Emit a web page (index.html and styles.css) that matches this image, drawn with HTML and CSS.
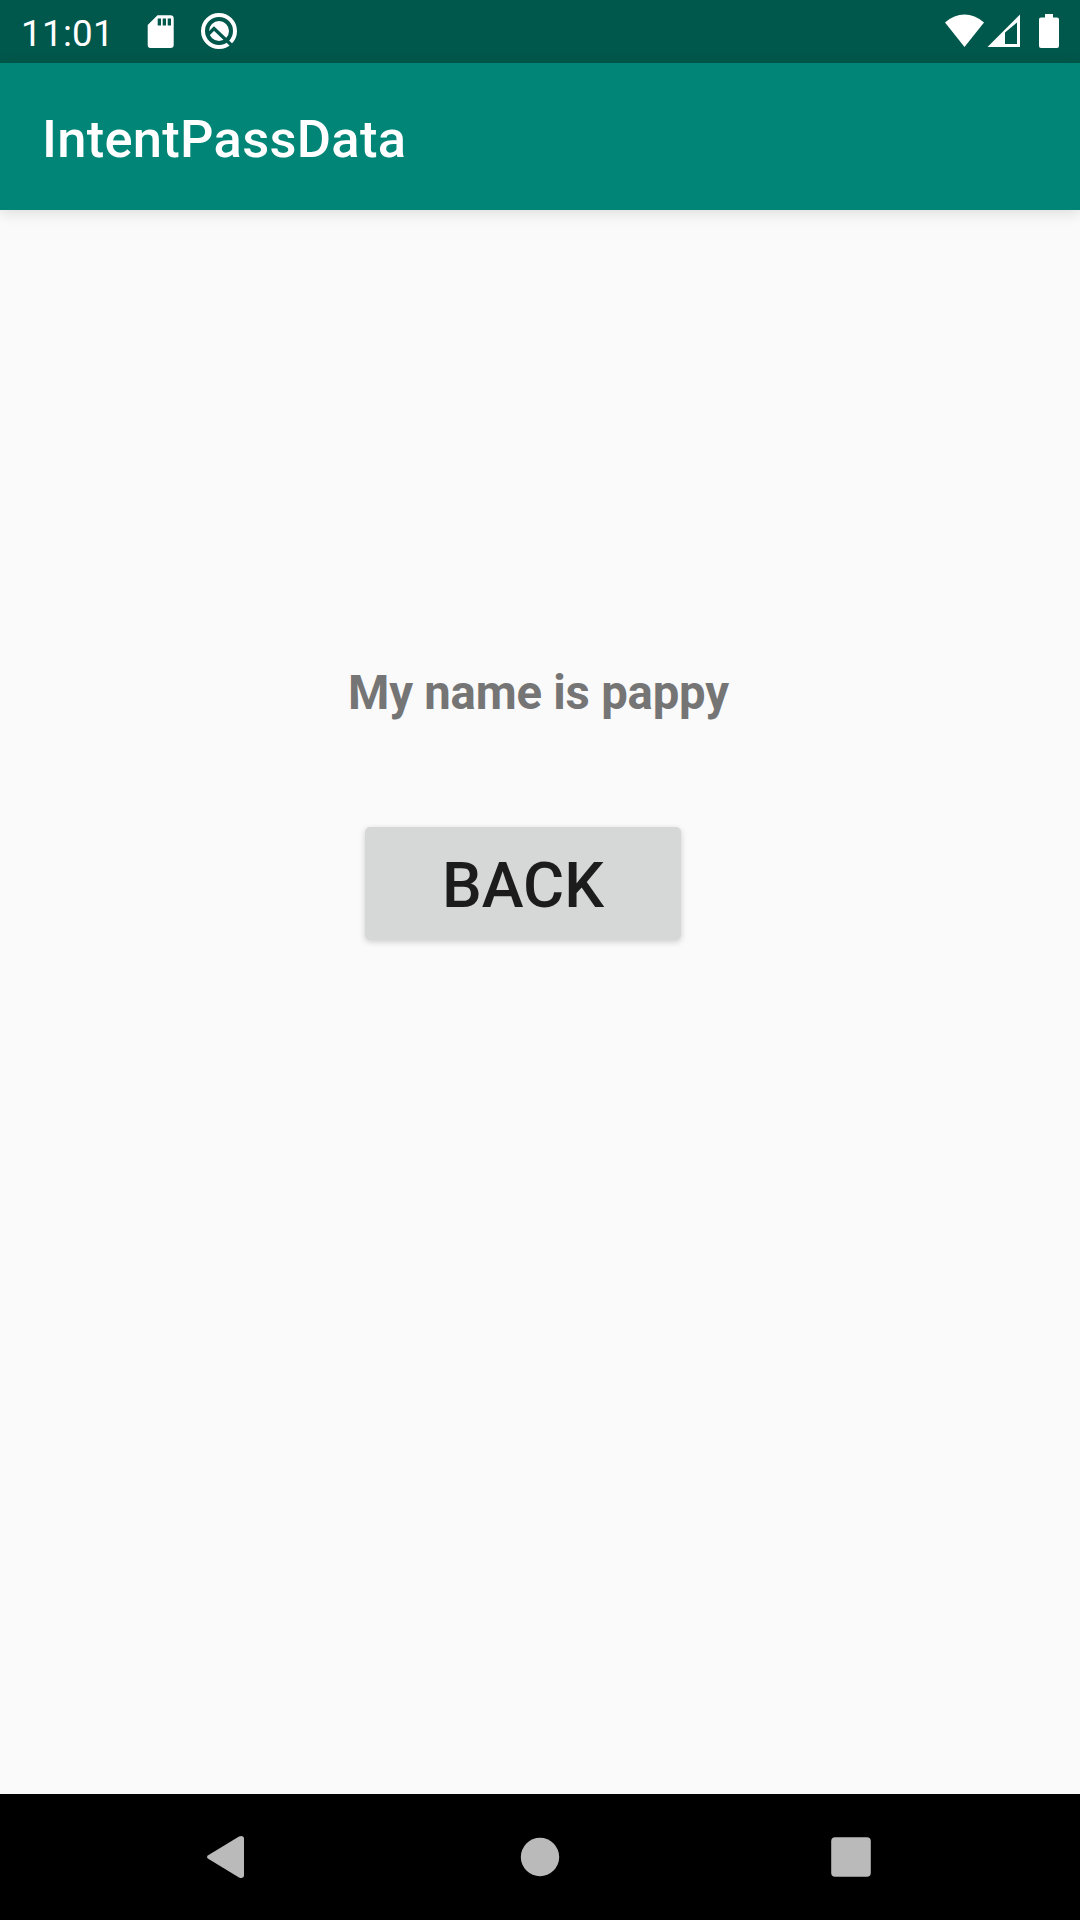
FILE: index.html
```html
<!DOCTYPE html>
<html lang="en">
<head>
<meta charset="utf-8">
<title>IntentPassData</title>
<link rel="stylesheet" href="styles.css">
</head>
<body>
<div class="screen">
  <header class="status-bar">
    <div class="status-left">
      <span class="clock">11:01</span>
      <svg class="sd-icon" width="27" height="34" viewBox="0 0 27 34"><path fill="#fff" fill-rule="evenodd" d="M10.500 .3H23.500Q26.700 .3 26.700 3.500V30Q26.700 33 23.500 33H3.500Q.7 33 .7 30V10ZM10.700 3.500V10.500H14V3.500ZM15.700 3.500V10.500H19V3.500ZM20.700 3.500V10.500H24V3.500Z"/></svg>
      <svg class="q-icon" width="38" height="38" viewBox="0 0 38 38"><circle cx="19" cy="19" r="16" fill="none" stroke="#fff" stroke-width="4"/><circle cx="19" cy="19" r="10" fill="#fff"/><path d="M7.500 23L14 16.500L34 35.500" fill="none" stroke="#00574b" stroke-width="3.300"/></svg>
    </div>
    <div class="status-right">
      <svg class="wifi-icon" width="40" height="34" viewBox="0 0 40 34"><path fill="#fff" d="M19.500 33L0 8.500C12 -2.300 27 -2.300 39 8.500Z"/></svg>
      <svg class="signal-icon" width="34" height="34" viewBox="0 0 34 34"><path fill="#fff" fill-rule="evenodd" d="M.5 33L33 .5V33ZM18 18.500V30H30V8.500Z"/></svg>
      <svg class="battery-icon" width="20" height="34" viewBox="0 0 20 34"><path fill="#fff" d="M6 0H14V3.500H18Q20 3.500 20 5.500V32Q20 34 18 34H2Q0 34 0 32V5.500Q0 3.500 2 3.500H6Z"/></svg>
    </div>
  </header>
  <div class="app-bar"><h1 class="title">IntentPassData</h1></div>
  <main class="content">
    <p class="message">My name is pappy</p>
    <button class="back-button" type="button">BACK</button>
  </main>
  <nav class="nav-bar">
    <svg class="nav-icon" width="48" height="48" viewBox="0 0 48 48"><path fill="#bababa" d="M6.200 22.200L37 3.500Q41 1.800 42 5V43Q41 46.200 37 44.500L6.200 25.800Q3.800 24 6.200 22.200Z"/></svg>
    <svg class="nav-icon" width="48" height="48" viewBox="0 0 48 48"><circle cx="24" cy="24" r="19.200" fill="#bababa"/></svg>
    <svg class="nav-icon" width="48" height="48" viewBox="0 0 48 48"><rect x="4.200" y="4.200" width="39.600" height="39.600" rx="4" fill="#bababa"/></svg>
  </nav>
</div>
</body>
</html>
```
FILE: styles.css
```css
* { box-sizing: border-box; }
body { margin: 0; font-family: Roboto, "Liberation Sans", sans-serif; }
svg { display: block; flex: none; }
.screen { display: flex; flex-direction: column; width: 1080px; height: 1920px; background: #fafafa; overflow: hidden; }
.status-bar { display: flex; justify-content: space-between; height: 63px; padding: 0 21px; background: #00574b; color: #fff; }
.status-left, .status-right { display: flex; }
.clock { width: 126px; font-size: 36.75px; letter-spacing: .3px; line-height: 43px; padding-top: 12px; }
.sd-icon { margin-top: 15px; }
.q-icon { margin: 12px 0 0 26px; }
.status-right { padding-top: 14px; }
.signal-icon { margin-left: 2px; }
.battery-icon { margin-left: 18px; }
.app-bar { display: flex; align-items: center; height: 147px; padding: 5px 0 0 42px; background: #008577; color: #fff; box-shadow: 0 3px 14px rgba(0, 0, 0, .12); }
.title { margin: 0; font-size: 52.5px; font-weight: 500; letter-spacing: .28px; line-height: 62px; }
.content { flex: 1; display: flex; flex-direction: column; align-items: flex-start; padding: 455px 0 0 348px; }
.message { margin: 0; height: 56px; font-size: 47.25px; font-weight: 700; letter-spacing: -.2px; line-height: 56px; color: #757575; white-space: nowrap; }
.back-button { width: 316px; height: 113px; margin: 106px 0 0 17px; padding: 4px 0 0; border: 0; border-radius: 5px; background: #d6d7d7; color: #1c1c1c; font: 500 63px/109px Roboto, "Liberation Sans", sans-serif; box-shadow: 0 2px 6px rgba(0, 0, 0, .18); }
.nav-bar { display: flex; align-items: center; justify-content: space-between; height: 126px; padding: 0 205px 0 202px; background: #000; }
.nav-icon:nth-child(2) { margin-left: 2px; }
```
